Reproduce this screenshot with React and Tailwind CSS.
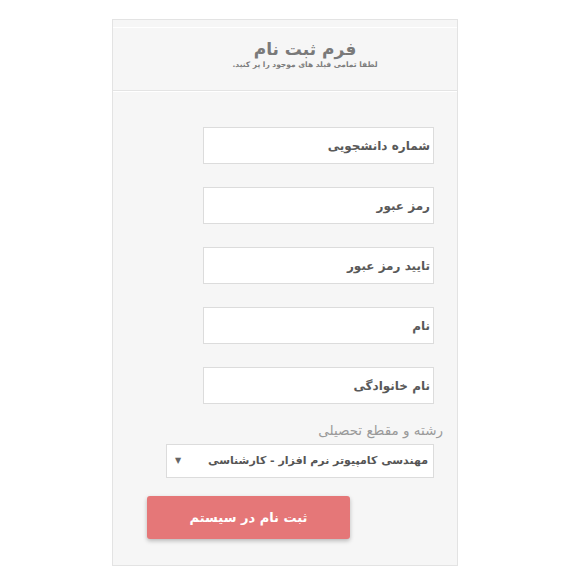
export default function App() {
  const fields = ["شماره دانشجویی", "رمز عبور", "تایید رمز عبور", "نام", "نام خانوادگی"];

  return (
    <div
      className="min-h-screen bg-white pt-[19px]"
      style={{ fontFamily: '"DejaVu Sans", "Noto Sans", sans-serif' }}
    >
      <div dir="rtl" className="ml-[112px] w-[346px] h-[547px] bg-[#f6f6f6] border border-[#e3e3e3] flex flex-col">
        {/* Header */}
        <div className="mt-[7px] border-t border-white h-[64px] border-b border-b-[#e4e4e4] flex flex-col items-center">
          <h1 className="mt-[10px] text-[17px] font-bold text-[#7a7a7a] leading-[22px] ml-[40px]">فرم ثبت نام</h1>
          <p className="text-[7.5px] font-bold text-[#7d7d7d] leading-[10px] ml-[40px]">لطفا تمامی فیلد های موجود را پر کنید.</p>
        </div>
        <div className="border-t border-white" />

        {/* Fields */}
        <div className="flex flex-col pr-[23px] pt-[35px] gap-[23px]">
          {fields.map((f) => (
            <div
              key={f}
              className="w-[231px] h-[37px] bg-white border border-[#dcdcdc] flex items-center pr-[3px] text-[12px] font-bold text-[#595959] whitespace-nowrap"
            >
              {f}
            </div>
          ))}
        </div>

        <div className="pr-[14px] mt-[16px] text-[13.5px] text-[#9a9a9a]">رشته و مقطع تحصیلی</div>
        <div className="mr-[23px] mt-[4px] w-[268px] h-[34px] bg-white border border-[#dcdcdc] flex items-center justify-between pr-[5px] pl-[8px] text-[11px] font-bold text-[#555] whitespace-nowrap">
          <span>مهندسی کامپیوتر نرم افزار - کارشناسی</span>
          <span className="text-[8px] text-[#666]">▼</span>
        </div>

        <div className="mr-[107px] mt-[18px] w-[203px] h-[43px] rounded-[3px] bg-[#e57778] shadow-[0_2px_4px_rgba(0,0,0,0.25)] flex items-center justify-center text-[13px] font-bold text-white">
          ثبت نام در سیستم
        </div>
      </div>
    </div>
  );
}
